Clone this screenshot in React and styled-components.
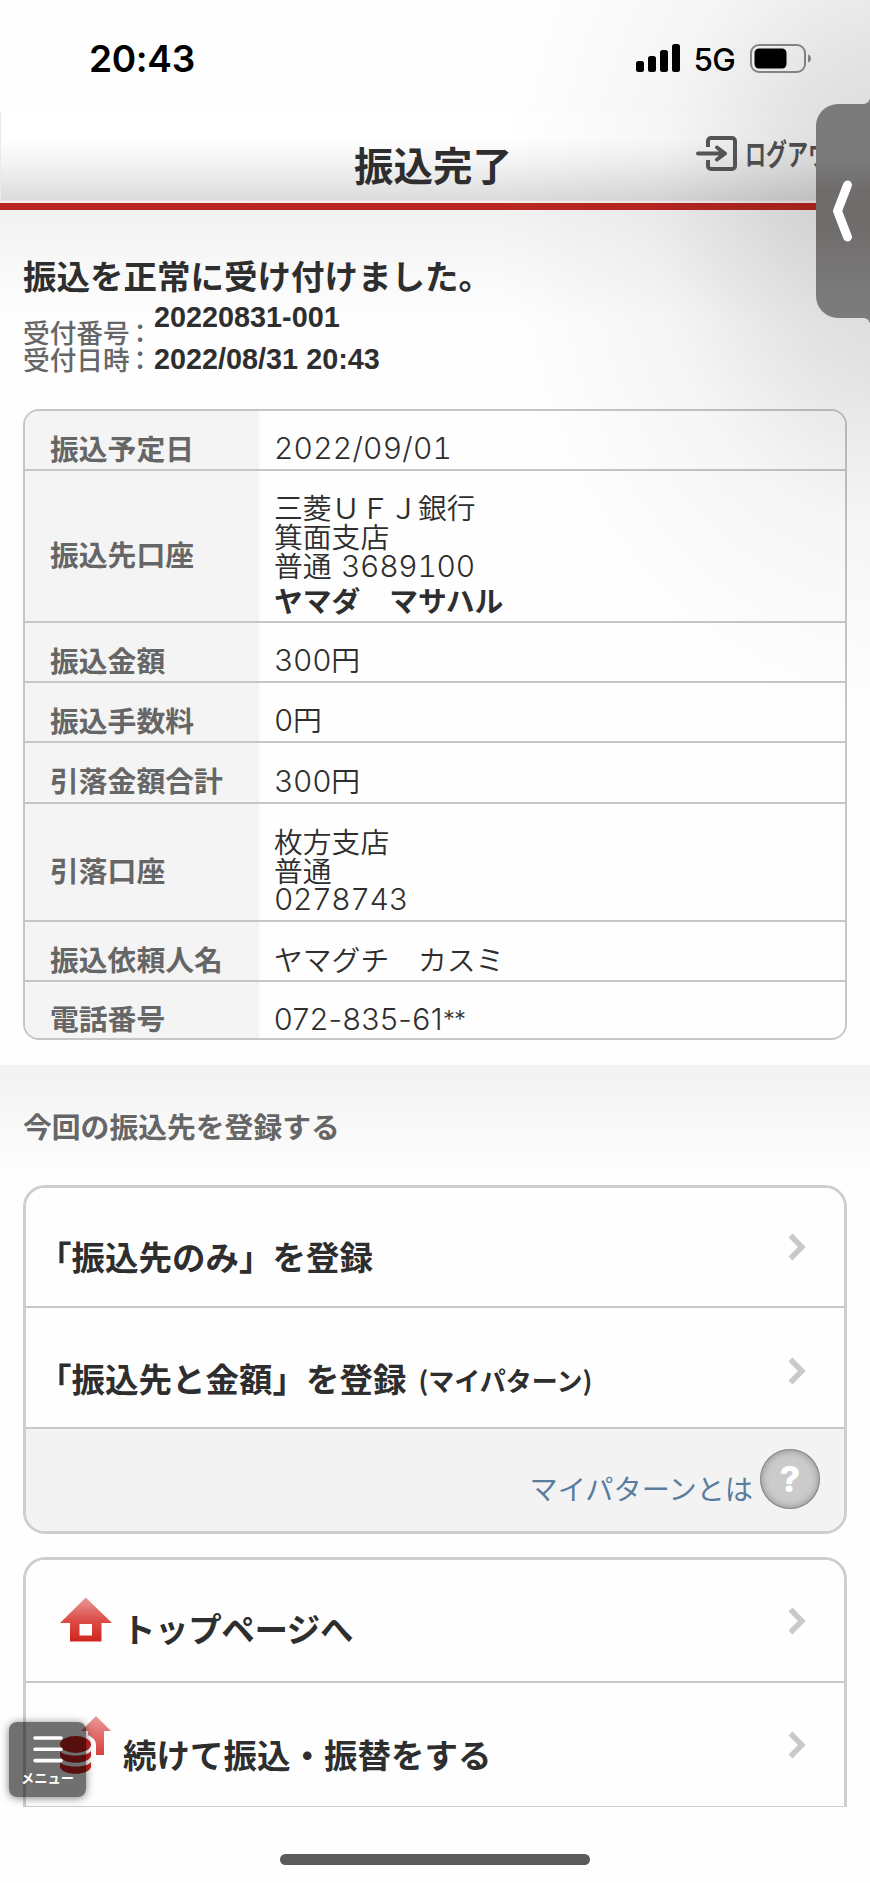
import React from 'react';
import styled, { createGlobalStyle } from 'styled-components';

const GlobalStyle = createGlobalStyle`
  * {
    box-sizing: border-box;
  }
  body {
    margin: 0;
    background: #fff;
    font-family: "Liberation Sans", "Noto Sans CJK JP", sans-serif;
  }
`
const Screen = styled.div`
  position: relative;
  display: flex;
  flex-direction: column;
  width: 870px;
  height: 1883px;
  overflow: hidden;
  background: #fefefe;
  color: #2e2e2e;
  font-family: "Noto Sans CJK JP", sans-serif;
`
const StatusBar = styled.div`
  display: flex;
  justify-content: space-between;
  align-items: center;
  flex: none;
  height: 112px;
  padding: 4px 59px 0 89px;
  color: #000;
  font-family: Inter, sans-serif;
`
const Time = styled.span`
  font-size: 37px;
  font-weight: 600;
  line-height: 1;
  letter-spacing: -.3px;
`
const StatusIcons = styled.div`
  display: flex;
  align-items: center;
  gap: 15px;
`
const Network = styled.span`
  font-size: 31.5px;
  font-weight: 500;
  line-height: 1;
  letter-spacing: -.8px;
  padding-top: 3px;
  margin-left: -1px;
`
const Header = styled.header`
  display: grid;
  grid-template-columns: 356px 1fr 174px;
  flex: none;
  height: 98px;
  border-bottom: 7px solid #b92620;
  background: linear-gradient(#fff 30%, #f4f4f4 55%, #dcdbdc 97%, #f6eff0 98%);
  box-shadow: inset 1px 0 #f1e6e9;
`
const Title = styled.h1`
  grid-column: 2;
  margin: 0;
  padding-top: 23px;
  font-size: 39.5px;
  line-height: 58px;
  font-weight: 700;
  margin-left: -2px;
`
const Logout = styled.a`
  display: flex;
  align-items: flex-start;
  gap: 7px;
  padding-top: 24px;
  color: #555;
  white-space: nowrap;
  svg {
    flex: none;
  }
`
const LogoutLabel = styled.span`
  display: block;
  flex: none;
  font-size: 30px;
  line-height: 32px;
  font-weight: 700;
  transform: scaleX(.7);
  transform-origin: left;
`
const Message = styled.section`
  flex: none;
  height: 199px;
  padding: 40px 23px 0;
  background: linear-gradient(#f2f2f3, #fefefe 110px);
`
const MessageTitle = styled.h2`
  margin: 0;
  font-size: 33.5px;
  line-height: 50px;
  font-weight: 700;
`
const Receipt = styled.dl`
  display: grid;
  grid-template-columns: 131px 1fr;
  grid-template-rows: 27px 27px;
  margin: 0;
  padding-top: 19px;
`
const ReceiptLabel = styled.dt`
  margin-top: -1px;
  color: #666;
  font-size: 26.7px;
  line-height: 27px;
  font-weight: 500;
  white-space: nowrap;
`
const Colon = styled.span`
  margin-left: -3px;
`
const ReceiptValue = styled.dd`
  margin: 0;
  margin-top: ${props => props.raised ? '-15px' : '0'};
  font-family: "Liberation Sans", sans-serif;
  font-size: 28.8px;
  line-height: 26px;
  font-weight: 700;
`
const Table = styled.div`
  flex: none;
  margin: 0 23px;
  border: 2px solid #c6c6c6;
  border-radius: 16px;
  overflow: hidden;
`
const Row = styled.div`
  display: grid;
  grid-template-columns: 234px 1fr;
  height: ${props => props.height}px;
  border-bottom: 2px solid #c6c6c6;
  &:last-child {
    border-bottom: none;
  }
`
const Label = styled.div`
  display: flex;
  align-items: center;
  padding: 14px 0 0 25px;
  background: #f4f4f4;
  color: #666;
  font-size: 28.8px;
  line-height: 29px;
  font-weight: 700;
  white-space: nowrap;
`
const Value = styled.div`
  display: flex;
  flex-direction: column;
  justify-content: center;
  padding: 15px 0 0 15px;
  background: #fefefe;
  font-size: 28.8px;
  line-height: 29px;
  font-weight: 350;
  white-space: pre;
`
const Digits = styled.span`
  margin-left: ${props => props.gap || 0}px;
  padding-top: ${props => props.drop || 0}px;
  font-family: Inter, sans-serif;
  font-size: 30px;
  font-weight: 300;
  letter-spacing: ${props => props.spacing || '-.3px'};
  font-feature-settings: ${props => props.plain ? 'normal' : '"tnum"'};
`
const Stars = styled.span`
  font-size: 24px;
  line-height: 1;
  vertical-align: 2px;
  letter-spacing: -1px;
`
const Payee = styled.strong`
  padding: 4px 0 1px;
  font-weight: 700;
`
const RegisterTitle = styled.h3`
  flex: none;
  margin: 25px 0 0;
  height: 120px;
  padding: 39px 23px 0;
  background: linear-gradient(#f2f2f2, #fefefe 115px);
  color: #666;
  font-size: 28.8px;
  line-height: 43px;
  font-weight: 700;
`
const Card = styled.div`
  flex: none;
  margin: 0 23px ${props => props.cut ? '0' : '23px'};
  height: ${props => props.height}px;
  border: 3px solid #cecece;
  border-radius: ${props => props.cut ? '22px 22px 0 0' : '22px'};
  border-bottom-width: ${props => props.cut ? '1px' : '3px'};
  overflow: hidden;
`
const Item = styled.a`
  display: flex;
  align-items: center;
  justify-content: space-between;
  height: ${props => props.height}px;
  padding: 0 38px 0 ${props => props.indent || 12}px;
  border-bottom: ${props => props.last ? 'none' : '2px solid #c8c8c8'};
  background: #fefefe;
`
const ItemText = styled.span`
  display: flex;
  align-items: center;
  padding-top: ${props => props.drop}px;
  font-size: 33.5px;
  line-height: 40px;
  font-weight: 700;
  letter-spacing: ${props => props.tight ? '-.4px' : 'normal'};
  white-space: pre;
`
const Small = styled.small`
  margin-left: 12px;
  padding-top: 5px;
  font-size: 26px;
`
const IconBox = styled.span`
  display: flex;
  width: ${props => props.width}px;
  height: 60px;
  margin-top: -${props => props.lift}px;
  flex: none;
`
const Help = styled.div`
  display: flex;
  justify-content: flex-end;
  gap: 7px;
  height: 102px;
  padding: 20px 24px 0 0;
  background: #f3f3f3;
`
const HelpLink = styled.a`
  padding-top: 19px;
  color: #5a7c9f;
  font-size: 28.2px;
  line-height: 40px;
  font-weight: 400;
`
const HelpBadge = styled.span`
  display: flex;
  align-items: center;
  justify-content: center;
  width: 60px;
  height: 60px;
  border-radius: 50%;
  background: #cbcbcb;
  box-shadow: inset 0 0 8px rgba(0, 0, 0, .4), inset 0 0 0 1px #aaa;
  color: #fff;
  font-family: Inter, sans-serif;
  font-size: 36px;
  font-weight: 800;
`
const Glow = styled.div`
  position: absolute;
  inset: 0;
  pointer-events: none;
  background: radial-gradient(ellipse 400px 510px at 895px 215px, rgba(0, 0, 0, .16), rgba(0, 0, 0, .11) 30%, rgba(0, 0, 0, .035) 60%, rgba(0, 0, 0, 0));
`
const SideTab = styled.button`
  position: absolute;
  top: 104px;
  right: 0;
  display: flex;
  align-items: center;
  padding: 0 0 0 17px;
  width: 54px;
  height: 214px;
  border: none;
  border-radius: 22px 0 0 22px;
  background: linear-gradient(#7b7b7b 25%, #706c6c 40%, #706c6c 58%, #7b7b7b 90%);
  &::before, &::after {
    content: "";
    position: absolute;
    right: 0;
    width: 6px;
    height: 6px;
  }
  &::before {
    top: -6px;
    background: radial-gradient(circle at 0 0, transparent 5.5px, #7b7b7b 6px);
  }
  &::after {
    bottom: -6px;
    background: radial-gradient(circle at 0 100%, transparent 5.5px, #7b7b7b 6px);
  }
`
const MenuButton = styled.button`
  position: absolute;
  left: 9px;
  top: 1722px;
  display: flex;
  flex-direction: column;
  align-items: center;
  gap: 6px;
  padding: 14px 0 0;
  width: 77px;
  height: 75px;
  border: none;
  border-radius: 8px;
  background: rgba(0, 0, 0, .56);
  box-shadow: 0 1px 8px rgba(0, 0, 0, .5);
  color: #fff;
  font-family: "Noto Sans CJK JP", sans-serif;
  font-size: 13.3px;
  line-height: 18px;
  font-weight: 700;
`
const HomeArea = styled.div`
  display: flex;
  justify-content: center;
  flex: 1;
  padding-top: 47px;
  background: #fefefe;
`
const HomeIndicator = styled.div`
  width: 310px;
  height: 11px;
  border-radius: 6px;
  background: #5a5a5a;
`

const Signal = () => (
  <svg width="44" height="28" viewBox="0 0 44 28">
    <rect x="0" y="17" width="8" height="11" rx="2.5" />
    <rect x="12" y="12" width="8" height="16" rx="2.5" />
    <rect x="24" y="6" width="8" height="22" rx="2.5" />
    <rect x="36" y="0" width="8" height="28" rx="2.5" />
  </svg>
)

const Battery = () => (
  <svg width="61" height="29" viewBox="0 0 61 29">
    <rect x="1" y="1" width="54" height="27" rx="8" fill="none" stroke="#8e8e8e" strokeWidth="2" />
    <rect x="4.5" y="4.5" width="32" height="20" rx="4.5" />
    <path d="M58 10.5c4 1 4 7 0 8z" fill="#8e8e8e" />
  </svg>
)

const LogoutIcon = () => (
  <svg width="42" height="35" viewBox="0 0 42 35" fill="none" stroke="#5a5a5a" strokeWidth="4">
    <path d="M12 11V5a3 3 0 0 1 3-3h21a3 3 0 0 1 3 3v25a3 3 0 0 1-3 3H15a3 3 0 0 1-3-3v-6" />
    <path d="M2 17.5h27M21 11.500l8 6-8 6" strokeLinecap="round" strokeLinejoin="round" />
  </svg>
)

const Chevron = ({ drop = 0 }) => (
  <svg width="18" height={28 + drop * 2} viewBox={`0 ${-drop * 2} 18 ${28 + drop * 2}`}>
    <path d="M2.5 2.5L13.8 14L2.5 25.5" fill="none" stroke="#c9c9c9" strokeWidth="5.5" />
  </svg>
)

const HomeIcon = () => (
  <svg width="52" height="60" viewBox="0 0 52 60">
    <defs>
      <linearGradient id="home" x1="0" y1="0" x2="0" y2="1">
        <stop offset="0" stopColor="#e99a98" />
        <stop offset=".5" stopColor="#dc4f4b" />
        <stop offset="1" stopColor="#cf261b" />
      </linearGradient>
    </defs>
    <path fill="url(#home)" fillRule="evenodd" d="M25.8 7.500L52 33H41.500V51.500H10V33H0zM19.500 34v11.500H32V34z" />
  </svg>
)

const CoinsIcon = () => (
  <svg width="52" height="60" viewBox="0 0 52 60">
    <defs>
      <linearGradient id="arrow" x1="0" y1="0" x2="0" y2="1">
        <stop offset="0" stopColor="#eb9997" />
        <stop offset="1" stopColor="#d6403c" />
      </linearGradient>
    </defs>
    <path fill="url(#arrow)" d="M36 2L51 17H44V41H28V17H21z" />
    <path fill="#fff" d="M-3 31C-3 15 36 15 36 31V52H-3z" />
    <g fill="#c5241f">
      <path d="M0 48c4 6 27 6 31 0v5c-2 9-29 9-31 0z" />
      <path d="M0 37c4 6 27 6 31 0v5c-2 9-29 9-31 0z" />
      <ellipse cx="15.5" cy="30.5" rx="15.5" ry="8.5" />
    </g>
  </svg>
)

const rows = [
  { label: '振込予定日', height: 60, value: <Digits spacing=".2px" drop={2}>2022/09/01</Digits> },
  {
    label: '振込先口座',
    height: 152,
    value: (
      <>
        <span>三菱ＵＦＪ銀行</span>
        <span>箕面支店</span>
        <span>普通 <Digits gap={3}>3689100</Digits></span>
        <Payee>ヤマダ　マサハル</Payee>
      </>
    ),
  },
  { label: '振込金額', height: 60, value: <span><Digits>300</Digits>円</span> },
  { label: '振込手数料', height: 60, value: <span><Digits>0</Digits>円</span> },
  { label: '引落金額合計', height: 61, value: <span><Digits>300</Digits>円</span> },
  {
    label: '引落口座',
    height: 118,
    value: (
      <>
        <span>枚方支店</span>
        <span>普通</span>
        <Digits drop={1}>0278743</Digits>
      </>
    ),
  },
  { label: '振込依頼人名', height: 60, value: <span>ヤマグチ　カスミ</span> },
  { label: '電話番号', height: 56, value: <Digits plain spacing=".45px" drop={4}>072-835-61<Stars>**</Stars></Digits> },
]

export default () => {
  return (
    <Screen>
      <GlobalStyle />
      <StatusBar>
        <Time>20:43</Time>
        <StatusIcons>
          <Signal />
          <Network>5G</Network>
          <Battery />
        </StatusIcons>
      </StatusBar>
      <Header>
        <Title>振込完了</Title>
        <Logout>
          <LogoutIcon />
          <LogoutLabel>ログアウト</LogoutLabel>
        </Logout>
      </Header>
      <Message>
        <MessageTitle>振込を正常に受け付けました。</MessageTitle>
        <Receipt>
          <ReceiptLabel>受付番号<Colon>：</Colon></ReceiptLabel>
          <ReceiptValue raised>20220831-001</ReceiptValue>
          <ReceiptLabel>受付日時<Colon>：</Colon></ReceiptLabel>
          <ReceiptValue>2022/08/31 20:43</ReceiptValue>
        </Receipt>
      </Message>
      <Table>
        {
          rows.map((row, index) => (
            <Row key={index} height={row.height}>
              <Label>{row.label}</Label>
              <Value>{row.value}</Value>
            </Row>
          ))
        }
      </Table>
      <RegisterTitle>今回の振込先を登録する</RegisterTitle>
      <Card height={349}>
        <Item height={120}>
          <ItemText drop={17}>「振込先のみ」を登録</ItemText>
          <Chevron />
        </Item>
        <Item height={121}>
          <ItemText drop={20}>「振込先と金額」を登録<Small>(マイパターン)</Small></ItemText>
          <Chevron drop={3} />
        </Item>
        <Help>
          <HelpLink>マイパターンとは</HelpLink>
          <HelpBadge>?</HelpBadge>
        </Help>
      </Card>
      <Card height={250} cut>
        <Item height={123} indent={34}>
          <ItemText drop={15} tight><IconBox width={62} lift={17}><HomeIcon /></IconBox>トップページへ</ItemText>
          <Chevron />
        </Item>
        <Item height={123} indent={34} last>
          <ItemText drop={19}><IconBox width={63} lift={21}><CoinsIcon /></IconBox>続けて振込・振替をする</ItemText>
          <Chevron />
        </Item>
      </Card>
      <HomeArea>
        <HomeIndicator />
      </HomeArea>
      <Glow />
      <SideTab>
        <svg width="30" height="64" viewBox="0 0 30 64">
          <path d="M14.5 6L4.500 32L14.500 58" fill="none" stroke="#fff" strokeWidth="9" strokeLinecap="round" strokeLinejoin="round" />
        </svg>
      </SideTab>
      <MenuButton>
        <svg width="30" height="27" viewBox="0 0 30 27" stroke="#fff" strokeWidth="3.6" strokeLinecap="round">
          <path d="M2 2h26M2 13.3h26M2 24.6h26" />
        </svg>
        メニュー
      </MenuButton>
    </Screen>
  )
}
